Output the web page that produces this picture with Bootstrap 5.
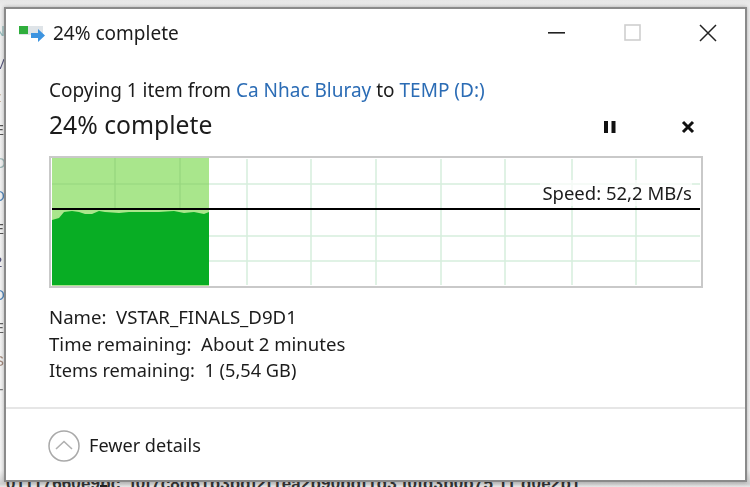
<!DOCTYPE html>
<html lang="en">
<head>
<meta charset="utf-8">
<title>24% complete</title>
<link href="https://cdn.jsdelivr.net/npm/bootstrap@5.3.0/dist/css/bootstrap.min.css" rel="stylesheet">
<style>
html,body{height:100%;margin:0;overflow:hidden}
body{background:linear-gradient(#e6e6e6 0,#efefef 8px,#f4f4f4 470px,#cfcfcf 484px,#e8e8e8 487px);font-family:"Noto Sans","Open Sans",sans-serif;color:#1c1c1c;position:relative;width:750px;height:487px}
.side-text{position:absolute;left:-6px;top:14px;width:10px;overflow:hidden;font:15px/33px "Liberation Sans",sans-serif;white-space:nowrap;opacity:.75}
.foot-text{position:absolute;left:6px;top:474px;font:600 17px/20px "Liberation Sans",sans-serif;color:#333;white-space:nowrap;letter-spacing:.15px}
.foot-mark{position:absolute;left:100px;top:485px;width:7px;height:2px;background:#222}
.os-window{position:absolute;left:4px;top:7px;width:743px;height:475px;background:#fff;border:2px solid #8a8a8a;box-shadow:0 0 4px rgba(0,0,0,.3);filter:blur(.35px);font-size:18.6px}
.win-title{height:49px;padding:0 0 0 13px;font-size:19px}
.win-title .caption{margin-left:7px;line-height:1}
.ctl{display:block}
.ctls{position:absolute;right:28px;top:15px;width:169px}
.copy-body{padding:19px 0 0 43px}
.from-line{line-height:26px;height:26px;font-size:19px;white-space:nowrap}
.from-line span{color:#2b6cb5}
.heading-row{height:38px;margin-top:3px;padding-right:50px}
.big-text{font-size:24.7px;line-height:30px}
.chart{position:relative;width:654px;height:132px;margin-top:12px}
.chart svg{display:block}
.speed{position:absolute;right:11px;top:24px;line-height:26px;font-size:18.5px;background:rgba(255,255,255,.7);padding:0 0 0 2px;white-space:nowrap}
.info{margin-top:16px;line-height:26.5px}
.info div{height:26.5px;white-space:nowrap}
.info .items-row{font-size:18.2px}
.sep{border-top:2px solid #e6e6e6;margin-top:23px}
.foot-row{padding:20px 0 0 41px;gap:8px;font-size:18.1px}
</style>
</head>
<body>
<div class="side-text">
<div style="color:#7aa">N</div><div style="color:#225">M</div><div style="color:#a86">z</div><div style="color:#222">E</div><div style="color:#8aa">O</div><div style="color:#26a">D</div><div style="color:#222">E</div><div style="color:#225">2</div><div style="color:#26a">D</div><div style="color:#333">E</div><div style="color:#865">S</div><div style="color:#555">T</div><div style="color:#777">-</div>
</div>
<div class="foot-text">01117660e9bc_f0f7c8d61b3bdf2f1ea2b90bdf1d3 f0fd3b0b75 11 d0e2b1</div>
<div class="foot-mark"></div>

<div class="os-window">
  <div class="win-title d-flex align-items-center">
    <svg width="27" height="18" viewBox="0 0 27 18" aria-hidden="true">
      <rect x="0" y="1" width="24" height="9" fill="#dfe4e8"/>
      <rect x="0" y="1" width="9" height="8" fill="#2fae3c"/>
      <path d="M12 8h7V4l7 6.500-7 6.500v-4h-7z" fill="#3d94e0"/>
    </svg>
    <span class="caption">24% complete</span>
  </div>
  <div class="ctls d-flex justify-content-between align-items-center">
    <svg class="ctl" width="18" height="18" viewBox="0 0 18 18" aria-hidden="true"><rect x="0" y="8" width="17" height="1.600" fill="#222"/></svg>
    <svg class="ctl" width="18" height="18" viewBox="0 0 18 18" aria-hidden="true"><rect x="1" y="1" width="15" height="15" fill="none" stroke="#cfcfcf" stroke-width="1.600"/></svg>
    <svg class="ctl" width="18" height="18" viewBox="0 0 18 18" aria-hidden="true"><path d="M1 1l16 16M17 1L1 17" stroke="#222" stroke-width="1.500" fill="none"/></svg>
  </div>

  <div class="copy-body">
    <div class="from-line">Copying 1 item from <span>Ca Nhac Bluray</span> to <span>TEMP (D:)</span></div>
    <div class="heading-row d-flex align-items-center">
      <div class="big-text flex-grow-1">24% complete</div>
      <svg width="14" height="14" viewBox="0 0 14 14" class="me-5 mt-1" aria-hidden="true"><rect x="1" y="1" width="4" height="12" fill="#111"/><rect x="8.500" y="1" width="4" height="12" fill="#111"/></svg>
      <svg width="14" height="14" viewBox="0 0 14 14" class="ms-3 mt-1" aria-hidden="true"><path d="M2 2l10 10M12 2L2 12" stroke="#111" stroke-width="3" fill="none"/></svg>
    </div>
    <div class="chart">
      <svg width="654" height="132" viewBox="0 0 654 132" aria-hidden="true">
        <rect x="1" y="1" width="652" height="130" fill="#fff" stroke="#c9c9c9" stroke-width="2"/>
        <g stroke="#d6eedd" stroke-width="1.500">
          <path d="M198 3V129M262 3V129M327 3V129M392 3V129M456 3V129M523 3V129M587 3V129"/>
          <path d="M3 28H651M3 80H651M3 105H651"/>
        </g>
        <rect x="3" y="2" width="157" height="128" fill="#a9e68c"/>
        <g stroke="#96d67e" stroke-width="1.200"><path d="M66 2V54M131 2V54M3 28H160"/></g>
        <path d="M3 64L10 62L15 56L23 55L30 56L36 58L43 58L50 55L56 56L70 57L80 56L95 56L110 56L125 55L135 57L145 56L155 58L160 56V129H3Z" fill="#08ad24"/>
        <rect x="3" y="52" width="648" height="2" fill="#000"/>
      </svg>
      <div class="speed">Speed: 52,2 MB/s</div>
    </div>
    <div class="info">
      <div>Name:&nbsp; VSTAR_FINALS_D9D1</div>
      <div>Time remaining:&nbsp; About 2 minutes</div>
      <div class="items-row">Items remaining:&nbsp; 1 (5,54 GB)</div>
    </div>
  </div>
  <div class="sep"></div>
  <div class="foot-row d-flex align-items-center">
    <svg width="34" height="34" viewBox="0 0 34 34" aria-hidden="true">
      <circle cx="17" cy="17" r="15" fill="#fff" stroke="#a9a9a9" stroke-width="1.500"/>
      <path d="M9 20L17 12.500L25 20" fill="none" stroke="#b0b0b0" stroke-width="1.600"/>
    </svg>
    <span>Fewer details</span>
  </div>
</div>
<script src="https://cdn.jsdelivr.net/npm/bootstrap@5.3.0/dist/js/bootstrap.bundle.min.js"></script>
</body>
</html>
